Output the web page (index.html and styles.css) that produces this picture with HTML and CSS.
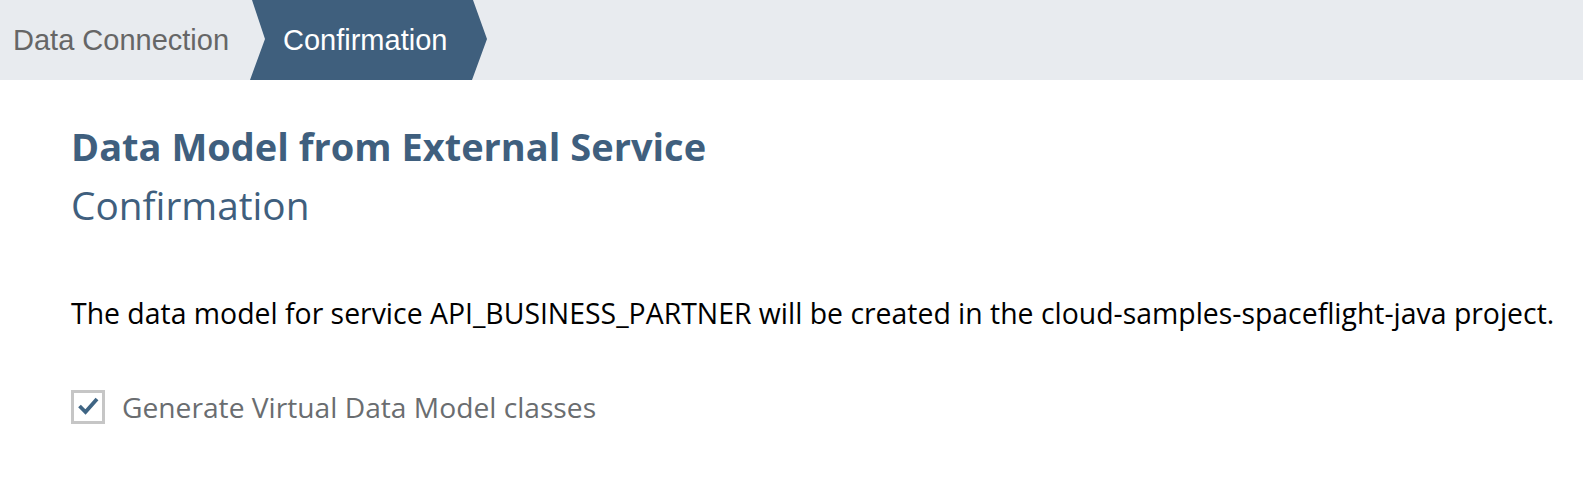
FILE: index.html
```html
<!DOCTYPE html>
<html>
<head>
<meta charset="utf-8">
<link rel="stylesheet" href="styles.css">
</head>
<body>
<header class="wizard-bar">
  <div class="step step-done">Data Connection</div>
  <div class="step step-current">
    <svg class="chevron" viewBox="0 0 240 80" preserveAspectRatio="none" aria-hidden="true">
      <polygon points="2,0 223,0 237,39 222,80 0,80 15,39" fill="#3f5f7d"/>
    </svg>
    <span class="step-label">Confirmation</span>
  </div>
</header>
<main class="content">
  <h1 class="title">Data Model from External Service</h1>
  <h2 class="subtitle">Confirmation</h2>
  <p class="message">The data model for service API_BUSINESS_PARTNER will be created in the cloud-samples-spaceflight-java project.</p>
  <label class="check">
    <span class="box">
      <svg viewBox="0 0 24 24" aria-hidden="true"><path d="M3.5 11 L9.5 17 L21 4" fill="none" stroke="#3f6584" stroke-width="3.8" stroke-linecap="butt" stroke-linejoin="miter"/></svg>
    </span>
    <span class="check-label">Generate Virtual Data Model classes</span>
  </label>
</main>
</body>
</html>
```
FILE: styles.css
```css
html, body {
  margin: 0;
  padding: 0;
  background: #ffffff;
}
body {
  font-family: "Open Sans", "Noto Sans", sans-serif;
  width: 1583px;
  height: 488px;
  overflow: hidden;
}
.wizard-bar {
  height: 80px;
  background: #e8ebef;
  display: flex;
  align-items: stretch;
}
.step {
  display: flex;
  align-items: center;
  font-family: "Liberation Sans", Arial, sans-serif;
  font-size: 29px;
}
.step-done {
  color: #666666;
  padding-left: 13px;
  width: 250px;
  box-sizing: border-box;
}
.step-current {
  position: relative;
  width: 240px;
  color: #ffffff;
}
.chevron {
  position: absolute;
  left: 0;
  top: 0;
  width: 240px;
  height: 80px;
}
.step-label {
  position: relative;
  margin-left: 33px;
}
.content {
  padding-left: 71px;
}
.title {
  margin: 0;
  padding-top: 44px;
  font-size: 38px;
  font-weight: 700;
  color: #3f5f7e;
  line-height: 44px;
}
.subtitle {
  margin: 0;
  padding-top: 13px;
  font-size: 38.8px;
  font-weight: 400;
  color: #3f5f7e;
  line-height: 48px;
}
.message {
  margin: 0;
  padding-top: 66px;
  font-size: 28.4px;
  color: #000000;
  line-height: 36px;
  white-space: nowrap;
}
.check {
  display: flex;
  align-items: center;
  margin-top: 57px;
  gap: 17px;
}
.box {
  width: 28px;
  height: 28px;
  border: 3px solid #c6c6c6;
  background: #ffffff;
  display: flex;
  align-items: center;
  justify-content: center;
}
.box svg {
  width: 24px;
  height: 24px;
}
.check-label {
  font-size: 28.2px;
  color: #6a6d70;
}
```
